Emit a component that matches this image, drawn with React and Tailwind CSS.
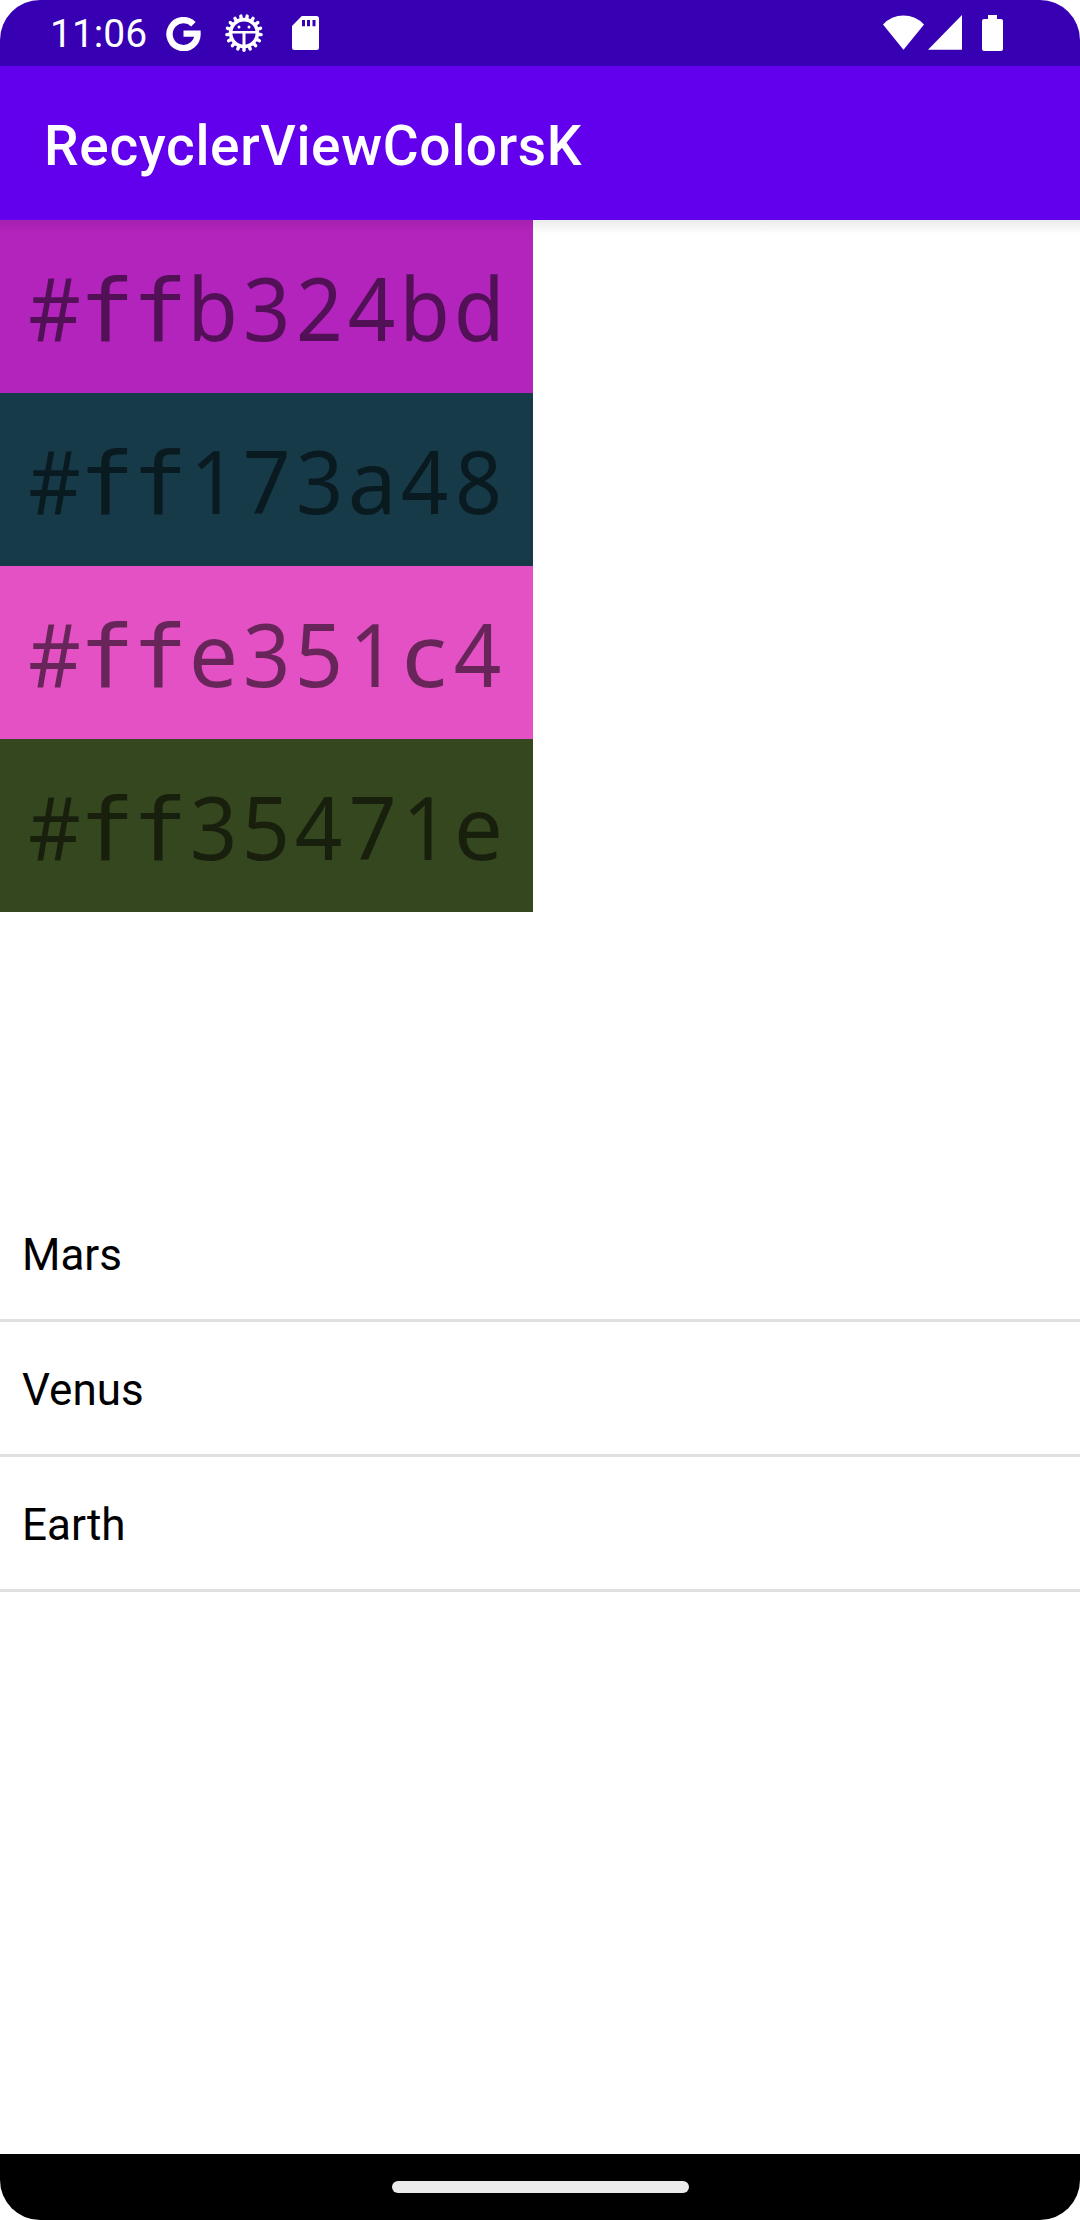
import React from "react";

// Each glyph sits in a fixed 53px cell and is condensed or widened to suit it.
const glyphs = {
  "#": "translate-x-[0.2px] scale-x-[0.925]",
  b: "translate-x-[0.4px] scale-x-[0.93]",
  d: "translate-x-[1.7px] scale-x-[0.94]",
  e: "translate-x-[2px] scale-x-[0.985]",
  a: "translate-x-[1.8px] scale-x-[0.99]",
  c: "translate-x-[2.7px] scale-x-[1.07]",
  1: "translate-x-[3.5px] scale-x-[0.93]",
  2: "translate-x-[2.9px] scale-x-[0.93]",
  3: "translate-x-[2.9px] scale-x-[0.94]",
  4: "translate-x-[1.7px] scale-x-[0.946]",
  5: "translate-x-[1.8px] scale-x-[0.96]",
  7: "translate-x-[2.8px] scale-x-[0.95]",
  8: "translate-x-[2.9px] scale-x-[0.935]",
  f: "-translate-x-[2.3px] scale-x-[1.07] font-['DejaVu_Sans_Mono',monospace] text-[87px]",
};

const colors = [
  { label: "#ffb324bd", bg: "bg-[#b324bd]" },
  { label: "#ff173a48", bg: "bg-[#173a48]" },
  { label: "#ffe351c4", bg: "bg-[#e351c4]" },
  { label: "#ff35471e", bg: "bg-[#35471e]" },
];

const planets = ["Mars", "Venus", "Earth"];
const teeth = Array.from({ length: 17 }, (_, i) => (i * 360) / 17);

function GoogleIcon() {
  return (
    <svg className="ml-5 h-[35px] w-[35px]" viewBox="0 0 35 35" fill="none">
      <path d="M27.4 8.2A14 14 0 1 0 31.5 17.6H17.5" stroke="white" strokeWidth="6.4" />
    </svg>
  );
}

function BugIcon() {
  return (
    <svg className="ml-6 h-[38px] w-[38px]" viewBox="0 0 38 38" fill="none" stroke="white">
      <circle cx="19" cy="19" r="13.4" strokeWidth="3.6" />
      {teeth.map((a) => (
        <path key={a} d="M19 33V36.2" strokeWidth="3.4" strokeLinecap="round" transform={`rotate(${a} 19 19)`} />
      ))}
      <path d="M6 18.2H32" strokeWidth="2.4" />
      <path d="M19 18.5V33" strokeWidth="3" />
      <g fill="white" stroke="none">
        <circle cx="14" cy="13" r="1.5" />
        <circle cx="24" cy="13" r="1.5" />
      </g>
    </svg>
  );
}

function CardIcon() {
  return (
    <svg className="ml-[29px] h-[34px] w-[27px]" viewBox="0 0 27 34" fill="white">
      <path fillRule="evenodd" d="M9.8 0H24.5A2.5 2.5 0 0 1 27 2.5V31.5A2.5 2.5 0 0 1 24.5 34H2.5A2.5 2.5 0 0 1 0 31.5V10ZM10 4V10.3H13V4ZM15 4V10.3H18V4ZM20.5 4V10.3H23.5V4Z" />
    </svg>
  );
}

function StatusBar() {
  return (
    <div className="flex h-[66px] items-center bg-[#3700b3] pl-[50px] pr-[77px] text-white">
      <span className="w-[96px] pt-[3px] text-[39px] leading-none">11:06</span>
      <GoogleIcon />
      <BugIcon />
      <CardIcon />
      <svg className="mb-[1px] ml-auto h-[35px] w-[41px]" viewBox="0 0 41 35" fill="white">
        <path d="M0 9.6A27.6 27.6 0 0 1 41 9.6L20.5 34.8Z" />
      </svg>
      <svg className="mb-[1px] ml-[4px] h-[35px] w-[34px]" viewBox="0 0 34 35" fill="white">
        <path d="M0 34.7H34V0Z" />
      </svg>
      <svg className="ml-5 h-9 w-[21px]" viewBox="0 0 21 36" fill="white">
        <path d="M6 0H15V4H19A2 2 0 0 1 21 6V34A2 2 0 0 1 19 36H2A2 2 0 0 1 0 34V6A2 2 0 0 1 2 4H6Z" />
      </svg>
    </div>
  );
}

function ColorRow({ label, bg }) {
  return (
    <li className={`h-[173px] w-[533px] whitespace-nowrap pl-7 font-['Noto_Sans',sans-serif] text-[88px] leading-[175px] text-black/54 ${bg}`}>
      {[...label].map((ch, i) => (
        <span key={i} className={`inline-block w-[53px] origin-left ${glyphs[ch]}`}>
          {ch}
        </span>
      ))}
    </li>
  );
}

export default function App() {
  return (
    <div className="flex h-[2220px] w-[1080px] flex-col overflow-hidden rounded-[40px] bg-white font-[Roboto,sans-serif]">
      <StatusBar />
      <header className="relative flex h-[154px] items-center bg-[#6200ee] pl-[44px] pt-[6px]">
        <h1 className="text-[55px] font-medium leading-none tracking-[0.66px] text-white">RecyclerViewColorsK</h1>
        <div className="absolute inset-x-0 top-full h-3.5 bg-gradient-to-b from-black/8 to-transparent" />
      </header>
      <main className="flex-1">
        <ul className="mb-[275px]">
          {colors.map((c) => (
            <ColorRow key={c.label} {...c} />
          ))}
        </ul>
        <ul>
          {planets.map((p) => (
            <li key={p} className="flex h-[135px] items-center border-b-3 border-[#e0e0e0] pl-[22px] pt-1 text-[44px] leading-none text-black">
              {p}
            </li>
          ))}
        </ul>
      </main>
      <footer className="flex h-[66px] items-center justify-center bg-black">
        <div className="h-[11.5px] w-[297px] rounded-full bg-[#ebebeb]" />
      </footer>
    </div>
  );
}
